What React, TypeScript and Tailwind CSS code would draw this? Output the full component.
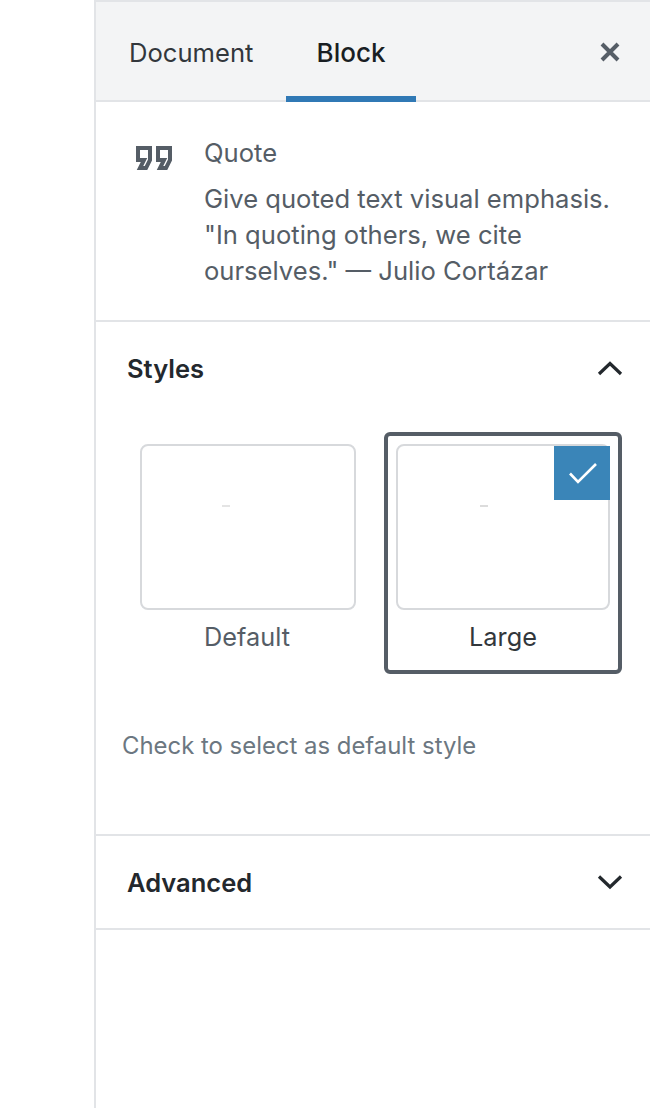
import React from "react";

function QuoteIcon() {
  return (
    <svg width="48" height="48" viewBox="0 0 24 24" className="block" fill="#555d66">
      <path d="M18.62 18h-5.24l2-4H13V6h8v7.24L18.62 18zm-2-2h.76L19 12.76V8h-4v4h3.62l-2 4zm-8 2H3.38l2-4H3V6h8v7.24L8.62 18zm-2-2h.76L9 12.76V8H5v4h3.62l-2 4z" />
    </svg>
  );
}

function Chevron({ up }: { up?: boolean }) {
  return (
    <svg width="26" height="16" viewBox="0 0 26 16" fill="none" stroke="#23282d" strokeWidth="3.2">
      <path d={up ? "M2 13 13 2.5 24 13" : "M2 2.5 13 13 24 2.5"} />
    </svg>
  );
}

function StyleCard({ label, active }: { label: string; active?: boolean }) {
  return (
    <div className={`${active ? "w-[238px] border-[#555d66]" : "w-[240px] border-transparent"} h-[242px] p-[8px] rounded-[6px] border-[4px] flex flex-col`}>
      <div className="relative h-[166px] rounded-[8px] border-[2px] border-[#d7d9dc] bg-white flex justify-center pt-[59px]">
        <div className={`w-[8px] h-[2px] ${active ? "mr-[38px] bg-[#dcdcdc]" : "mr-[44px] bg-[#e4e4e4]"}`} />
        {active && (
          <div className="absolute top-0 -right-[2px] w-[56px] h-[54px] bg-[#3a85b8] flex items-center justify-center">
            <svg className="ml-[2px]" width="30" height="22" viewBox="0 0 30 22" fill="none" stroke="#ffffff" strokeWidth="2.6">
              <path d="M2 11.5 10 20 28 2" />
            </svg>
          </div>
        )}
      </div>
      <div className={`text-center text-[25.3px] leading-[36px] mt-[9px] ${active ? "text-[#32373c]" : "text-[#555d66] pr-[2px]"}`}>{label}</div>
    </div>
  );
}

export default function App() {
  return (
    <div className="w-[650px] h-[1108px] bg-white overflow-hidden flex font-['Inter',sans-serif]">
      <div className="w-[94px] shrink-0" />
      <div className="flex-1 border-l-[2px] border-[#e2e4e7] flex flex-col">
        <div className="h-[102px] shrink-0 bg-[#f3f4f5] border-t-[2px] border-b-[2px] border-[#e2e4e7] flex items-stretch relative">
          <div className="w-[190px] flex items-center pl-[33px] pt-[4px] text-[25.6px] text-[#32373c]">Document</div>
          <div className="w-[130px] flex items-center justify-center pt-[3px] text-[26px] font-medium text-[#191e23] relative">
            Block
            <div className="absolute left-0 right-0 -bottom-[2px] h-[6px] bg-[#3079b5]" />
          </div>
          <div className="flex-1 flex items-center justify-end pr-[30px] pt-[2px]">
            <svg width="20" height="20" viewBox="0 0 20 20" stroke="#555d66" strokeWidth="4">
              <path d="M2 2l16 16M18 2 2 18" />
            </svg>
          </div>
        </div>
        <div className="h-[220px] shrink-0 border-b-[2px] border-[#e2e4e7] flex pl-[34px] pt-[33px]">
          <div className="w-[74px] shrink-0 -mt-[1px]"><QuoteIcon /></div>
          <div className="text-[25.6px] text-[#555d66] leading-[36px]">
            <div className="mb-[10px]">Quote</div>
            <div>Give quoted text visual emphasis.</div>
            <div>"In quoting others, we cite</div>
            <div>ourselves." — Julio Cortázar</div>
          </div>
        </div>
        <div className="h-[514px] shrink-0 border-b-[2px] border-[#e2e4e7] flex flex-col">
          <div className="flex items-center justify-between pl-[31px] pr-[27px] pt-[29px]">
            <span className="text-[25.5px] leading-[36px] font-semibold text-[#23282d]">Styles</span>
            <Chevron up />
          </div>
          <div className="flex gap-[16px] pl-[32px] mt-[45px]">
            <StyleCard label="Default" />
            <StyleCard label="Large" active />
          </div>
          <div className="pl-[26px] mt-[54px] text-[23.9px] leading-[36px] text-[#6c7781]">Check to select as default style</div>
        </div>
        <div className="h-[94px] shrink-0 border-b-[2px] border-[#e2e4e7] flex items-center justify-between pl-[31px] pr-[27px]">
          <span className="text-[25.5px] leading-[36px] font-semibold text-[#23282d] pt-[2px]">Advanced</span>
          <Chevron />
        </div>
      </div>
    </div>
  );
}
